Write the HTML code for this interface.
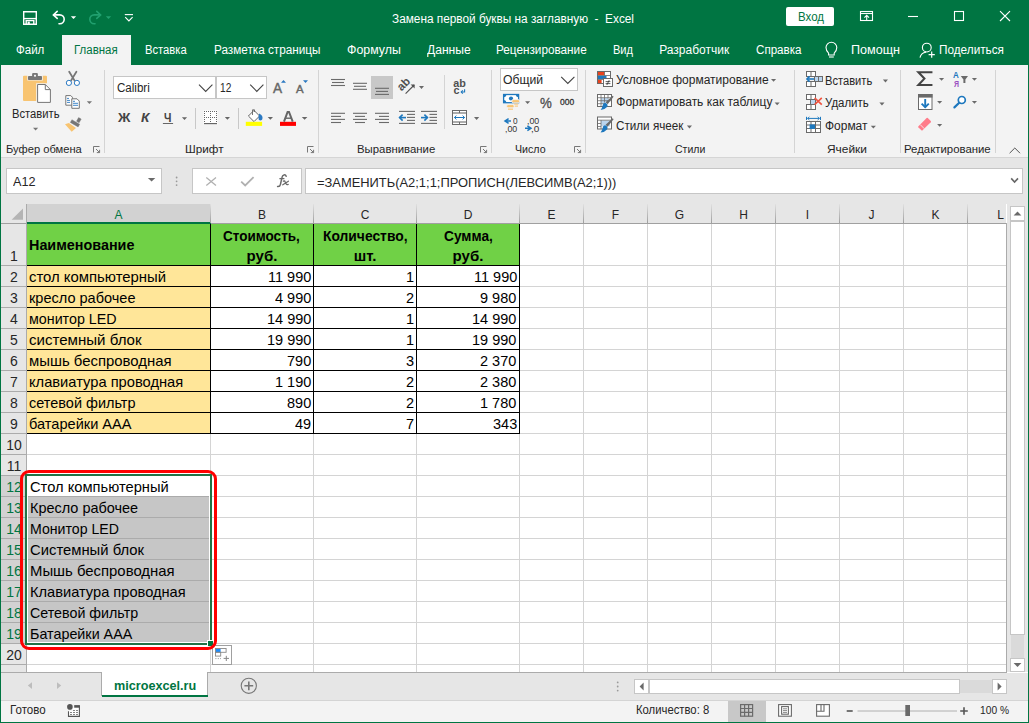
<!DOCTYPE html>
<html><head><meta charset="utf-8"><style>
html,body{margin:0;padding:0;}
body{width:1029px;height:723px;overflow:hidden;position:relative;background:#fff;font-family:"Liberation Sans", sans-serif;}
#r{position:absolute;left:0;top:0;width:1029px;height:723px;overflow:hidden;}
#r>*{position:absolute;}
.t{white-space:pre;transform-origin:0 0;}
svg{overflow:visible}
</style></head><body><div id="r">
<div style="left:0px;top:0px;width:1029px;height:65px;background:#007542;"></div>
<div style="left:62px;top:35px;width:69px;height:30px;background:#F3F3F3;"></div>
<div style="left:0px;top:65px;width:1029px;height:92px;background:#F3F3F3;"></div>
<div style="left:0px;top:157px;width:1029px;height:1px;background:#D5D5D5;"></div>
<div style="left:0px;top:158px;width:1029px;height:46px;background:#E6E6E6;"></div>
<div class="t" style="left:392.00px;top:13.35px;font-size:12px;line-height:12px;color:#fff;font-weight:normal;transform:scaleX(0.9847);">Замена первой буквы на заглавную  -  Excel</div>
<div style="left:786px;top:7px;width:48px;height:19px;background:#fff;border-radius:2px"></div>
<div class="t" style="left:797.50px;top:11.35px;font-size:12px;line-height:12px;color:#007542;font-weight:normal;transform:scaleX(0.9574);">Вход</div>
<div class="t" style="left:16.40px;top:44.35px;font-size:12px;line-height:12px;color:#fff;font-weight:normal;transform:scaleX(0.9588);">Файл</div>
<div class="t" style="left:74.00px;top:44.35px;font-size:12px;line-height:12px;color:#007542;font-weight:normal;transform:scaleX(0.9565);">Главная</div>
<div class="t" style="left:145.30px;top:44.35px;font-size:12px;line-height:12px;color:#fff;font-weight:normal;transform:scaleX(0.9348);">Вставка</div>
<div class="t" style="left:214.30px;top:44.35px;font-size:12px;line-height:12px;color:#fff;font-weight:normal;transform:scaleX(0.9782);">Разметка страницы</div>
<div class="t" style="left:347.00px;top:44.35px;font-size:12px;line-height:12px;color:#fff;font-weight:normal;transform:scaleX(1.0303);">Формулы</div>
<div class="t" style="left:426.50px;top:44.35px;font-size:12px;line-height:12px;color:#fff;font-weight:normal;transform:scaleX(1.0079);">Данные</div>
<div class="t" style="left:496.30px;top:44.35px;font-size:12px;line-height:12px;color:#fff;font-weight:normal;transform:scaleX(0.9787);">Рецензирование</div>
<div class="t" style="left:613.30px;top:44.35px;font-size:12px;line-height:12px;color:#fff;font-weight:normal;transform:scaleX(0.9209);">Вид</div>
<div class="t" style="left:659.20px;top:44.35px;font-size:12px;line-height:12px;color:#fff;font-weight:normal;">Разработчик</div>
<div class="t" style="left:755.50px;top:44.35px;font-size:12px;line-height:12px;color:#fff;font-weight:normal;transform:scaleX(0.9665);">Справка</div>
<div class="t" style="left:851.00px;top:44.35px;font-size:12px;line-height:12px;color:#fff;font-weight:normal;transform:scaleX(1.0485);">Помощн</div>
<div class="t" style="left:938.50px;top:44.35px;font-size:12px;line-height:12px;color:#fff;font-weight:normal;transform:scaleX(0.9809);">Поделиться</div>
<div class="t" style="left:6.40px;top:143.70px;font-size:11.3px;line-height:11.3px;color:#262626;font-weight:normal;transform:scaleX(0.9874);">Буфер обмена</div>
<div class="t" style="left:184.50px;top:143.70px;font-size:11.3px;line-height:11.3px;color:#262626;font-weight:normal;transform:scaleX(1.0357);">Шрифт</div>
<div class="t" style="left:357.30px;top:143.70px;font-size:11.3px;line-height:11.3px;color:#262626;font-weight:normal;transform:scaleX(1.0056);">Выравнивание</div>
<div class="t" style="left:514.60px;top:143.70px;font-size:11.3px;line-height:11.3px;color:#262626;font-weight:normal;transform:scaleX(0.9415);">Число</div>
<div class="t" style="left:674.70px;top:143.70px;font-size:11.3px;line-height:11.3px;color:#262626;font-weight:normal;transform:scaleX(0.9310);">Стили</div>
<div class="t" style="left:826.70px;top:143.70px;font-size:11.3px;line-height:11.3px;color:#262626;font-weight:normal;transform:scaleX(1.0557);">Ячейки</div>
<div class="t" style="left:904.30px;top:143.70px;font-size:11.3px;line-height:11.3px;color:#262626;font-weight:normal;transform:scaleX(1.0074);">Редактирование</div>
<div style="left:104px;top:70px;width:1px;height:83px;background:#D4D4D4;"></div>
<div style="left:318px;top:70px;width:1px;height:83px;background:#D4D4D4;"></div>
<div style="left:491px;top:70px;width:1px;height:83px;background:#D4D4D4;"></div>
<div style="left:585px;top:70px;width:1px;height:83px;background:#D4D4D4;"></div>
<div style="left:794px;top:70px;width:1px;height:83px;background:#D4D4D4;"></div>
<div style="left:900px;top:70px;width:1px;height:83px;background:#D4D4D4;"></div>
<div style="left:995px;top:70px;width:1px;height:83px;background:#D4D4D4;"></div>
<div style="left:6px;top:168px;width:156px;height:26px;box-sizing:border-box;border:1px solid #C6C6C6;background:#fff;"></div>
<div class="t" style="left:13.40px;top:176.35px;font-size:12px;line-height:12px;color:#262626;font-weight:normal;transform:scaleX(1.0534);">A12</div>
<div style="left:192px;top:168px;width:110px;height:26px;box-sizing:border-box;border:1px solid #C6C6C6;background:#fff;"></div>
<div style="left:305px;top:168px;width:718px;height:26px;box-sizing:border-box;border:1px solid #C6C6C6;background:#fff;"></div>
<div class="t" style="left:317.20px;top:177.35px;font-size:12px;line-height:12px;color:#262626;font-weight:normal;transform:scaleX(1.0750);">=ЗАМЕНИТЬ(A2;1;1;ПРОПИСН(ЛЕВСИМВ(A2;1)))</div>
<div style="left:1px;top:204px;width:1005px;height:19px;background:#E6E6E6;"></div>
<div style="left:27px;top:204px;width:183px;height:18px;background:#D2D2D2;"></div>
<div style="left:1px;top:223px;width:1005px;height:1px;background:#A0A0A0;"></div>
<div style="left:27px;top:222px;width:184px;height:2px;background:#007542;"></div>
<div style="left:1px;top:224px;width:25px;height:448px;background:#E6E6E6;"></div>
<div style="left:1px;top:476px;width:25px;height:167px;background:#D2D2D2;"></div>
<div style="left:26px;top:204px;width:1px;height:468px;background:#ABABAB;"></div>
<div style="left:27px;top:224px;width:979px;height:448px;background:#fff;"></div>
<div style="left:210px;top:204px;width:1px;height:19px;background:linear-gradient(#E0E0E0,#9E9E9E);"></div>
<div style="left:210px;top:224px;width:1px;height:448px;background:#D4D4D4;"></div>
<div style="left:313px;top:204px;width:1px;height:19px;background:linear-gradient(#E0E0E0,#9E9E9E);"></div>
<div style="left:313px;top:224px;width:1px;height:448px;background:#D4D4D4;"></div>
<div style="left:416px;top:204px;width:1px;height:19px;background:linear-gradient(#E0E0E0,#9E9E9E);"></div>
<div style="left:416px;top:224px;width:1px;height:448px;background:#D4D4D4;"></div>
<div style="left:519px;top:204px;width:1px;height:19px;background:linear-gradient(#E0E0E0,#9E9E9E);"></div>
<div style="left:519px;top:224px;width:1px;height:448px;background:#D4D4D4;"></div>
<div style="left:583px;top:204px;width:1px;height:19px;background:linear-gradient(#E0E0E0,#9E9E9E);"></div>
<div style="left:583px;top:224px;width:1px;height:448px;background:#D4D4D4;"></div>
<div style="left:647px;top:204px;width:1px;height:19px;background:linear-gradient(#E0E0E0,#9E9E9E);"></div>
<div style="left:647px;top:224px;width:1px;height:448px;background:#D4D4D4;"></div>
<div style="left:711px;top:204px;width:1px;height:19px;background:linear-gradient(#E0E0E0,#9E9E9E);"></div>
<div style="left:711px;top:224px;width:1px;height:448px;background:#D4D4D4;"></div>
<div style="left:775px;top:204px;width:1px;height:19px;background:linear-gradient(#E0E0E0,#9E9E9E);"></div>
<div style="left:775px;top:224px;width:1px;height:448px;background:#D4D4D4;"></div>
<div style="left:839px;top:204px;width:1px;height:19px;background:linear-gradient(#E0E0E0,#9E9E9E);"></div>
<div style="left:839px;top:224px;width:1px;height:448px;background:#D4D4D4;"></div>
<div style="left:903px;top:204px;width:1px;height:19px;background:linear-gradient(#E0E0E0,#9E9E9E);"></div>
<div style="left:903px;top:224px;width:1px;height:448px;background:#D4D4D4;"></div>
<div style="left:967px;top:204px;width:1px;height:19px;background:linear-gradient(#E0E0E0,#9E9E9E);"></div>
<div style="left:967px;top:224px;width:1px;height:448px;background:#D4D4D4;"></div>
<div style="left:1px;top:265px;width:25px;height:1px;background:#ABABAB;"></div>
<div style="left:27px;top:265px;width:979px;height:1px;background:#D4D4D4;"></div>
<div style="left:1px;top:286px;width:25px;height:1px;background:#ABABAB;"></div>
<div style="left:27px;top:286px;width:979px;height:1px;background:#D4D4D4;"></div>
<div style="left:1px;top:307px;width:25px;height:1px;background:#ABABAB;"></div>
<div style="left:27px;top:307px;width:979px;height:1px;background:#D4D4D4;"></div>
<div style="left:1px;top:328px;width:25px;height:1px;background:#ABABAB;"></div>
<div style="left:27px;top:328px;width:979px;height:1px;background:#D4D4D4;"></div>
<div style="left:1px;top:349px;width:25px;height:1px;background:#ABABAB;"></div>
<div style="left:27px;top:349px;width:979px;height:1px;background:#D4D4D4;"></div>
<div style="left:1px;top:370px;width:25px;height:1px;background:#ABABAB;"></div>
<div style="left:27px;top:370px;width:979px;height:1px;background:#D4D4D4;"></div>
<div style="left:1px;top:391px;width:25px;height:1px;background:#ABABAB;"></div>
<div style="left:27px;top:391px;width:979px;height:1px;background:#D4D4D4;"></div>
<div style="left:1px;top:412px;width:25px;height:1px;background:#ABABAB;"></div>
<div style="left:27px;top:412px;width:979px;height:1px;background:#D4D4D4;"></div>
<div style="left:1px;top:433px;width:25px;height:1px;background:#ABABAB;"></div>
<div style="left:27px;top:433px;width:979px;height:1px;background:#D4D4D4;"></div>
<div style="left:1px;top:454px;width:25px;height:1px;background:#ABABAB;"></div>
<div style="left:27px;top:454px;width:979px;height:1px;background:#D4D4D4;"></div>
<div style="left:1px;top:475px;width:25px;height:1px;background:#ABABAB;"></div>
<div style="left:27px;top:475px;width:979px;height:1px;background:#D4D4D4;"></div>
<div style="left:1px;top:496px;width:25px;height:1px;background:#ABABAB;"></div>
<div style="left:27px;top:496px;width:979px;height:1px;background:#D4D4D4;"></div>
<div style="left:1px;top:517px;width:25px;height:1px;background:#ABABAB;"></div>
<div style="left:27px;top:517px;width:979px;height:1px;background:#D4D4D4;"></div>
<div style="left:1px;top:538px;width:25px;height:1px;background:#ABABAB;"></div>
<div style="left:27px;top:538px;width:979px;height:1px;background:#D4D4D4;"></div>
<div style="left:1px;top:559px;width:25px;height:1px;background:#ABABAB;"></div>
<div style="left:27px;top:559px;width:979px;height:1px;background:#D4D4D4;"></div>
<div style="left:1px;top:580px;width:25px;height:1px;background:#ABABAB;"></div>
<div style="left:27px;top:580px;width:979px;height:1px;background:#D4D4D4;"></div>
<div style="left:1px;top:601px;width:25px;height:1px;background:#ABABAB;"></div>
<div style="left:27px;top:601px;width:979px;height:1px;background:#D4D4D4;"></div>
<div style="left:1px;top:622px;width:25px;height:1px;background:#ABABAB;"></div>
<div style="left:27px;top:622px;width:979px;height:1px;background:#D4D4D4;"></div>
<div style="left:1px;top:643px;width:25px;height:1px;background:#ABABAB;"></div>
<div style="left:27px;top:643px;width:979px;height:1px;background:#D4D4D4;"></div>
<div style="left:1px;top:664px;width:25px;height:1px;background:#ABABAB;"></div>
<div style="left:27px;top:664px;width:979px;height:1px;background:#D4D4D4;"></div>
<div style="left:1006px;top:223px;width:1px;height:450px;background:#ABABAB;"></div>
<div style="left:0px;top:672px;width:1007px;height:1px;background:#ABABAB;"></div>
<div class="t" style="left:114.49px;top:209.35px;font-size:12px;line-height:12px;color:#007542;font-weight:normal;">A</div>
<div class="t" style="left:257.99px;top:209.35px;font-size:12px;line-height:12px;color:#262626;font-weight:normal;">B</div>
<div class="t" style="left:360.66px;top:209.35px;font-size:12px;line-height:12px;color:#262626;font-weight:normal;">C</div>
<div class="t" style="left:463.66px;top:209.35px;font-size:12px;line-height:12px;color:#262626;font-weight:normal;">D</div>
<div class="t" style="left:547.49px;top:209.35px;font-size:12px;line-height:12px;color:#262626;font-weight:normal;">E</div>
<div class="t" style="left:611.83px;top:209.35px;font-size:12px;line-height:12px;color:#262626;font-weight:normal;">F</div>
<div class="t" style="left:674.83px;top:209.35px;font-size:12px;line-height:12px;color:#262626;font-weight:normal;">G</div>
<div class="t" style="left:739.16px;top:209.35px;font-size:12px;line-height:12px;color:#262626;font-weight:normal;">H</div>
<div class="t" style="left:805.83px;top:209.35px;font-size:12px;line-height:12px;color:#262626;font-weight:normal;">I</div>
<div class="t" style="left:868.50px;top:209.35px;font-size:12px;line-height:12px;color:#262626;font-weight:normal;">J</div>
<div class="t" style="left:931.49px;top:209.35px;font-size:12px;line-height:12px;color:#262626;font-weight:normal;">K</div>
<div class="t" style="left:997.16px;top:209.35px;font-size:12px;line-height:12px;color:#262626;font-weight:normal;">L</div>
<div class="t" style="left:10.10px;top:249.35px;font-size:14px;line-height:14px;color:#262626;font-weight:normal;">1</div>
<div class="t" style="left:10.10px;top:270.35px;font-size:14px;line-height:14px;color:#262626;font-weight:normal;">2</div>
<div class="t" style="left:10.10px;top:291.35px;font-size:14px;line-height:14px;color:#262626;font-weight:normal;">3</div>
<div class="t" style="left:10.10px;top:312.35px;font-size:14px;line-height:14px;color:#262626;font-weight:normal;">4</div>
<div class="t" style="left:10.10px;top:333.35px;font-size:14px;line-height:14px;color:#262626;font-weight:normal;">5</div>
<div class="t" style="left:10.10px;top:354.35px;font-size:14px;line-height:14px;color:#262626;font-weight:normal;">6</div>
<div class="t" style="left:10.10px;top:375.35px;font-size:14px;line-height:14px;color:#262626;font-weight:normal;">7</div>
<div class="t" style="left:10.10px;top:396.35px;font-size:14px;line-height:14px;color:#262626;font-weight:normal;">8</div>
<div class="t" style="left:10.10px;top:417.35px;font-size:14px;line-height:14px;color:#262626;font-weight:normal;">9</div>
<div class="t" style="left:6.21px;top:438.35px;font-size:14px;line-height:14px;color:#262626;font-weight:normal;">10</div>
<div class="t" style="left:6.73px;top:459.35px;font-size:14px;line-height:14px;color:#262626;font-weight:normal;">11</div>
<div class="t" style="left:6.21px;top:480.35px;font-size:14px;line-height:14px;color:#007542;font-weight:normal;">12</div>
<div class="t" style="left:6.21px;top:501.35px;font-size:14px;line-height:14px;color:#007542;font-weight:normal;">13</div>
<div class="t" style="left:6.21px;top:522.35px;font-size:14px;line-height:14px;color:#007542;font-weight:normal;">14</div>
<div class="t" style="left:6.21px;top:543.35px;font-size:14px;line-height:14px;color:#007542;font-weight:normal;">15</div>
<div class="t" style="left:6.21px;top:564.35px;font-size:14px;line-height:14px;color:#007542;font-weight:normal;">16</div>
<div class="t" style="left:6.21px;top:585.35px;font-size:14px;line-height:14px;color:#007542;font-weight:normal;">17</div>
<div class="t" style="left:6.21px;top:606.35px;font-size:14px;line-height:14px;color:#007542;font-weight:normal;">18</div>
<div class="t" style="left:6.21px;top:627.35px;font-size:14px;line-height:14px;color:#007542;font-weight:normal;">19</div>
<div class="t" style="left:6.21px;top:648.35px;font-size:14px;line-height:14px;color:#262626;font-weight:normal;">20</div>
<div style="left:27px;top:224px;width:183px;height:41px;background:#70D146;"></div>
<div style="left:211px;top:224px;width:308px;height:41px;background:#70D146;"></div>
<div style="left:27px;top:266px;width:183px;height:167px;background:#FFE699;"></div>
<div style="left:210px;top:224px;width:1px;height:210px;background:#000;"></div>
<div style="left:313px;top:224px;width:1px;height:210px;background:#000;"></div>
<div style="left:416px;top:224px;width:1px;height:210px;background:#000;"></div>
<div style="left:519px;top:224px;width:1px;height:210px;background:#000;"></div>
<div style="left:27px;top:265px;width:493px;height:1px;background:#000;"></div>
<div style="left:27px;top:286px;width:493px;height:1px;background:#000;"></div>
<div style="left:27px;top:307px;width:493px;height:1px;background:#000;"></div>
<div style="left:27px;top:328px;width:493px;height:1px;background:#000;"></div>
<div style="left:27px;top:349px;width:493px;height:1px;background:#000;"></div>
<div style="left:27px;top:370px;width:493px;height:1px;background:#000;"></div>
<div style="left:27px;top:391px;width:493px;height:1px;background:#000;"></div>
<div style="left:27px;top:412px;width:493px;height:1px;background:#000;"></div>
<div style="left:27px;top:433px;width:493px;height:1px;background:#000;"></div>
<div class="t" style="left:29.30px;top:269.35px;font-size:15px;line-height:15px;color:#000;font-weight:normal;transform:scaleX(0.9919);">стол компьютерный</div>
<div class="t" style="left:268.11px;top:269.35px;font-size:15px;line-height:15px;color:#000;font-weight:normal;transform:scaleX(0.9670);">11 990</div>
<div class="t" style="left:405.73px;top:269.35px;font-size:15px;line-height:15px;color:#000;font-weight:normal;transform:scaleX(0.9670);">1</div>
<div class="t" style="left:473.51px;top:269.35px;font-size:15px;line-height:15px;color:#000;font-weight:normal;transform:scaleX(0.9670);">11 990</div>
<div class="t" style="left:29.30px;top:290.35px;font-size:15px;line-height:15px;color:#000;font-weight:normal;transform:scaleX(0.9685);">кресло рабочее</div>
<div class="t" style="left:275.09px;top:290.35px;font-size:15px;line-height:15px;color:#000;font-weight:normal;transform:scaleX(0.9670);">4 990</div>
<div class="t" style="left:405.73px;top:290.35px;font-size:15px;line-height:15px;color:#000;font-weight:normal;transform:scaleX(0.9670);">2</div>
<div class="t" style="left:480.49px;top:290.35px;font-size:15px;line-height:15px;color:#000;font-weight:normal;transform:scaleX(0.9670);">9 980</div>
<div class="t" style="left:29.30px;top:311.35px;font-size:15px;line-height:15px;color:#000;font-weight:normal;transform:scaleX(0.9515);">монитор LED</div>
<div class="t" style="left:267.02px;top:311.35px;font-size:15px;line-height:15px;color:#000;font-weight:normal;transform:scaleX(0.9670);">14 990</div>
<div class="t" style="left:405.73px;top:311.35px;font-size:15px;line-height:15px;color:#000;font-weight:normal;transform:scaleX(0.9670);">1</div>
<div class="t" style="left:472.42px;top:311.35px;font-size:15px;line-height:15px;color:#000;font-weight:normal;transform:scaleX(0.9670);">14 990</div>
<div class="t" style="left:29.30px;top:332.35px;font-size:15px;line-height:15px;color:#000;font-weight:normal;transform:scaleX(1.0045);">системный блок</div>
<div class="t" style="left:267.02px;top:332.35px;font-size:15px;line-height:15px;color:#000;font-weight:normal;transform:scaleX(0.9670);">19 990</div>
<div class="t" style="left:405.73px;top:332.35px;font-size:15px;line-height:15px;color:#000;font-weight:normal;transform:scaleX(0.9670);">1</div>
<div class="t" style="left:472.42px;top:332.35px;font-size:15px;line-height:15px;color:#000;font-weight:normal;transform:scaleX(0.9670);">19 990</div>
<div class="t" style="left:29.30px;top:353.35px;font-size:15px;line-height:15px;color:#000;font-weight:normal;transform:scaleX(0.9930);">мышь беспроводная</div>
<div class="t" style="left:287.19px;top:353.35px;font-size:15px;line-height:15px;color:#000;font-weight:normal;transform:scaleX(0.9670);">790</div>
<div class="t" style="left:405.73px;top:353.35px;font-size:15px;line-height:15px;color:#000;font-weight:normal;transform:scaleX(0.9670);">3</div>
<div class="t" style="left:480.49px;top:353.35px;font-size:15px;line-height:15px;color:#000;font-weight:normal;transform:scaleX(0.9670);">2 370</div>
<div class="t" style="left:29.30px;top:374.35px;font-size:15px;line-height:15px;color:#000;font-weight:normal;transform:scaleX(0.9789);">клавиатура проводная</div>
<div class="t" style="left:275.09px;top:374.35px;font-size:15px;line-height:15px;color:#000;font-weight:normal;transform:scaleX(0.9670);">1 190</div>
<div class="t" style="left:405.73px;top:374.35px;font-size:15px;line-height:15px;color:#000;font-weight:normal;transform:scaleX(0.9670);">2</div>
<div class="t" style="left:480.49px;top:374.35px;font-size:15px;line-height:15px;color:#000;font-weight:normal;transform:scaleX(0.9670);">2 380</div>
<div class="t" style="left:29.30px;top:395.35px;font-size:15px;line-height:15px;color:#000;font-weight:normal;transform:scaleX(0.9646);">сетевой фильтр</div>
<div class="t" style="left:287.19px;top:395.35px;font-size:15px;line-height:15px;color:#000;font-weight:normal;transform:scaleX(0.9670);">890</div>
<div class="t" style="left:405.73px;top:395.35px;font-size:15px;line-height:15px;color:#000;font-weight:normal;transform:scaleX(0.9670);">2</div>
<div class="t" style="left:480.49px;top:395.35px;font-size:15px;line-height:15px;color:#000;font-weight:normal;transform:scaleX(0.9670);">1 780</div>
<div class="t" style="left:29.30px;top:416.35px;font-size:15px;line-height:15px;color:#000;font-weight:normal;transform:scaleX(0.9716);">батарейки AAA</div>
<div class="t" style="left:295.26px;top:416.35px;font-size:15px;line-height:15px;color:#000;font-weight:normal;transform:scaleX(0.9670);">49</div>
<div class="t" style="left:405.73px;top:416.35px;font-size:15px;line-height:15px;color:#000;font-weight:normal;transform:scaleX(0.9670);">7</div>
<div class="t" style="left:492.59px;top:416.35px;font-size:15px;line-height:15px;color:#000;font-weight:normal;transform:scaleX(0.9670);">343</div>
<div class="t" style="left:29.30px;top:237.35px;font-size:15px;line-height:15px;color:#000;font-weight:bold;transform:scaleX(0.9578);">Наименование</div>
<div class="t" style="left:223.10px;top:228.35px;font-size:15px;line-height:15px;color:#000;font-weight:bold;transform:scaleX(0.9002);">Стоимость,</div>
<div class="t" style="left:246.62px;top:248.35px;font-size:15px;line-height:15px;color:#000;font-weight:bold;">руб.</div>
<div class="t" style="left:322.75px;top:228.35px;font-size:15px;line-height:15px;color:#000;font-weight:bold;transform:scaleX(0.9226);">Количество,</div>
<div class="t" style="left:353.65px;top:248.35px;font-size:15px;line-height:15px;color:#000;font-weight:bold;">шт.</div>
<div class="t" style="left:443.80px;top:228.35px;font-size:15px;line-height:15px;color:#000;font-weight:bold;transform:scaleX(0.9124);">Сумма,</div>
<div class="t" style="left:452.62px;top:248.35px;font-size:15px;line-height:15px;color:#000;font-weight:bold;">руб.</div>
<div style="left:27px;top:476px;width:183px;height:167px;background:#fff;"></div>
<div style="left:28px;top:496px;width:181px;height:146px;background:#C6C6C6;"></div>
<div style="left:28px;top:496px;width:181px;height:1px;background:#ABABAB;"></div>
<div style="left:28px;top:517px;width:181px;height:1px;background:#ABABAB;"></div>
<div style="left:28px;top:538px;width:181px;height:1px;background:#ABABAB;"></div>
<div style="left:28px;top:559px;width:181px;height:1px;background:#ABABAB;"></div>
<div style="left:28px;top:580px;width:181px;height:1px;background:#ABABAB;"></div>
<div style="left:28px;top:601px;width:181px;height:1px;background:#ABABAB;"></div>
<div style="left:28px;top:622px;width:181px;height:1px;background:#ABABAB;"></div>
<div class="t" style="left:29.50px;top:479.35px;font-size:15px;line-height:15px;color:#000;font-weight:normal;transform:scaleX(0.9799);">Стол компьютерный</div>
<div class="t" style="left:29.50px;top:500.35px;font-size:15px;line-height:15px;color:#000;font-weight:normal;transform:scaleX(0.9638);">Кресло рабочее</div>
<div class="t" style="left:29.50px;top:521.35px;font-size:15px;line-height:15px;color:#000;font-weight:normal;transform:scaleX(0.9417);">Монитор LED</div>
<div class="t" style="left:29.50px;top:542.35px;font-size:15px;line-height:15px;color:#000;font-weight:normal;transform:scaleX(0.9875);">Системный блок</div>
<div class="t" style="left:29.50px;top:563.35px;font-size:15px;line-height:15px;color:#000;font-weight:normal;transform:scaleX(0.9925);">Мышь беспроводная</div>
<div class="t" style="left:29.50px;top:584.35px;font-size:15px;line-height:15px;color:#000;font-weight:normal;transform:scaleX(0.9759);">Клавиатура проводная</div>
<div class="t" style="left:29.50px;top:605.35px;font-size:15px;line-height:15px;color:#000;font-weight:normal;transform:scaleX(0.9503);">Сетевой фильтр</div>
<div class="t" style="left:29.50px;top:626.35px;font-size:15px;line-height:15px;color:#000;font-weight:normal;transform:scaleX(0.9552);">Батарейки AAA</div>
<div style="left:25px;top:474px;width:187px;height:171px;box-sizing:border-box;border:2px solid #217346"></div>
<div style="left:208px;top:641px;width:5px;height:5px;background:#007542;outline:1px solid #fff"></div>
<div style="left:1px;top:673px;width:1027px;height:27px;background:#E6E6E6;"></div>
<div style="left:102px;top:672px;width:106px;height:24px;background:#fff;"></div>
<div style="left:101px;top:672px;width:1px;height:24px;background:#ABABAB;"></div>
<div style="left:207px;top:672px;width:1px;height:24px;background:#ABABAB;"></div>
<div style="left:102px;top:695px;width:106px;height:2px;background:#007542;"></div>
<div class="t" style="left:113.70px;top:680.35px;font-size:12px;line-height:12px;color:#007542;font-weight:bold;transform:scaleX(1.0532);">microexcel.ru</div>
<div style="left:0px;top:700px;width:1029px;height:1px;background:#D4D4D4;"></div>
<div style="left:1px;top:701px;width:1027px;height:21px;background:#F3F3F3;"></div>
<div class="t" style="left:9.60px;top:704.35px;font-size:12px;line-height:12px;color:#262626;font-weight:normal;transform:scaleX(0.9605);">Готово</div>
<div class="t" style="left:636.30px;top:704.35px;font-size:12px;line-height:12px;color:#262626;font-weight:normal;transform:scaleX(0.9409);">Количество: 8</div>
<div class="t" style="left:979.80px;top:704.60px;font-size:11.5px;line-height:11.5px;color:#262626;font-weight:normal;transform:scaleX(0.8893);">100 %</div>
<div style="left:728px;top:701px;width:38px;height:21px;background:#C8C8C8;"></div>
<div style="left:0px;top:65px;width:1px;height:658px;background:#007542;"></div>
<div style="left:1028px;top:65px;width:1px;height:658px;background:#007542;"></div>
<div style="left:0px;top:722px;width:1029px;height:1px;background:#007542;"></div>
<svg style="left:0px;top:0px;" width="1029" height="65" viewBox="0 0 1029 65">
<g fill="none" stroke="#fff" stroke-width="1.4">
 <path d="M23.7 11.7 H36.3 V24.3 H23.7 Z"/>
 <path d="M24 18.6 H36"/>
 <path d="M26.2 24 V20.6 H33.8 V24"/>
</g>
<rect x="27.6" y="21.6" width="2.2" height="2.6" fill="#fff"/>
<g fill="none" stroke="#fff" stroke-width="1.6" stroke-linecap="round">
 <path d="M57.2 11.4 L53.4 14.9 L57.2 18.4"/>
 <path d="M53.8 14.9 H59.8 A4.4 4.4 0 0 1 59.8 23.7 H59"/>
</g>
<path d="M70.8 16.2 H76.2 L73.5 18.9 Z" fill="#fff"/>
<g fill="none" stroke="#21A06F" stroke-width="1.6" stroke-linecap="round">
 <path d="M96.8 11.4 L100.6 14.9 L96.8 18.4"/>
 <path d="M100.2 14.9 H94.2 A4.4 4.4 0 0 0 94.2 23.7 H95"/>
</g>
<path d="M105.8 16.2 H111.2 L108.5 18.9 Z" fill="#21A06F"/>
<path d="M124.8 14.6 H133" stroke="#fff" stroke-width="1.1"/>
<path d="M125.2 17.2 L128.9 20.9 L132.6 17.2" fill="none" stroke="#fff" stroke-width="1.1"/>
<g fill="none" stroke="#fff" stroke-width="1.1">
 <rect x="860.5" y="11.5" width="12" height="9"/>
 <path d="M860.5 13.5 H872.5"/>
 <path d="M866.7 20.5 V15.5 M864.4 17.6 L866.7 15.3 L869 17.6"/>
 <path d="M908 16.5 H918"/>
 <rect x="954.5" y="11.5" width="9" height="9"/>
 <path d="M1000 11.2 L1010 21 M1010 11.2 L1000 21"/>
</g>
</svg>
<svg style="left:0px;top:65px;" width="110" height="92" viewBox="0 0 110 92">
<g transform="translate(0,-65)">
 <!-- paste clipboard -->
 <path d="M24 75.7 H27.3 V80.6 H42.8 V75.7 H46 Q47 75.7 47 76.7 V83.3 H36.2 V100.9 H24 Q23 100.9 23 99.9 V76.7 Q23 75.7 24 75.7Z" fill="#F8C471"/>
 <rect x="28" y="76" width="14" height="4" rx="0.8" fill="#767676"/>
 <rect x="32.1" y="73" width="5.8" height="4" rx="1" fill="#767676"/>
 <rect x="34.1" y="74.8" width="1.8" height="1.8" fill="#fff"/>
 <path d="M37.6 84.5 H45.3 L50.4 89.6 V102.4 H37.6 Z" fill="#fff" stroke="#767676" stroke-width="1"/>
 <path d="M45.3 84.5 V89.6 H50.4" fill="none" stroke="#767676" stroke-width="1"/>
 <!-- arrow below paste -->
 <path d="M33 127.7 H38.2 L35.6 130.4 Z" fill="#767676"/>
 <!-- scissors -->
 <path d="M69.2 71.8 L74.6 80.6 M76.4 71.8 L71 80.6" stroke="#767676" stroke-width="1.8" stroke-linecap="round"/>
 <circle cx="68.9" cy="82.9" r="2.6" fill="#fff" stroke="#2B79C2" stroke-width="1"/>
 <circle cx="76.9" cy="82.9" r="2.6" fill="#fff" stroke="#2B79C2" stroke-width="1"/>
 <!-- copy -->
 <path d="M65.8 95.6 H70.8 L72.4 97.2 V105.2 H65.8 Z" fill="#fff" stroke="#767676" stroke-width="1"/>
 <path d="M67 98.4 H69 M67 100.4 H70 M67 102.4 H70" stroke="#2B79C2" stroke-width="0.9"/>
 <path d="M71.8 98.8 H77 L79.3 101.1 V108.3 H71.8 Z" fill="#fff" stroke="#767676" stroke-width="1"/>
 <path d="M73 101.3 H75 M73 103.3 H78 M73 105.3 H78" stroke="#2B79C2" stroke-width="0.9"/>
 <path d="M86.8 101.2 H92 L89.4 104 Z" fill="#767676"/>
 <!-- format painter -->
 <path d="M81.2 119.1 L78.6 117.6 L76.5 121.2 L79.1 122.8 Z" fill="#767676" stroke="#767676" stroke-width="0.4" stroke-linejoin="round"/>
 <path d="M78.1 126.9 L79.7 124.3 L71.9 119.7 L70.3 122.4 Z" fill="#767676" stroke="#767676" stroke-width="0.4" stroke-linejoin="round"/>
 <path d="M65 124.2 L68.9 122.9 L76 128.1 L71.7 131.7 Z" fill="#F8C471"/>
</g>
</svg>
<div style="left:113px;top:76px;width:103px;height:23px;box-sizing:border-box;border:1px solid #C6C6C6;background:#fff;"></div>
<div style="left:216px;top:76px;width:51px;height:23px;box-sizing:border-box;border:1px solid #C6C6C6;background:#fff;"></div>
<div class="t" style="left:116.80px;top:82.35px;font-size:12px;line-height:12px;color:#262626;font-weight:normal;transform:scaleX(0.9643);">Calibri</div>
<div class="t" style="left:219.70px;top:82.35px;font-size:12px;line-height:12px;color:#262626;font-weight:normal;transform:scaleX(0.8458);">12</div>
<svg style="left:0px;top:0px;" width="1029" height="160" viewBox="0 0 1029 160">
<g fill="none" stroke="#444444" stroke-width="1.1">
 <path d="M199 84.6 L205.7 91.4 L212.4 84.6"/>
 <path d="M250.2 84.6 L256.8 91.4 L263.4 84.6"/>
</g>
<path d="M281 82.7 L283.5 80 L286 82.7Z M303 80.2 H308 L305.5 82.9Z" fill="#2B79C2"/>
<path d="M181.9 117.2 H187.1 L184.5 120 Z M224.8 117 H230 L227.4 119.8 Z M267.7 117 H273 L270.35 119.8 Z M301.8 117 H307.4 L304.6 119.8 Z" fill="#666666"/>
<g fill="#666666">
 <rect x="162.9" y="123" width="10.2" height="1"/>
</g>
<rect x="203.5" y="110.5" width="14" height="14" fill="#fff"/><rect x="204" y="111" width="1" height="1" fill="#666"/><rect x="206" y="111" width="1" height="1" fill="#666"/><rect x="208" y="111" width="1" height="1" fill="#666"/><rect x="210" y="111" width="1" height="1" fill="#666"/><rect x="212" y="111" width="1" height="1" fill="#666"/><rect x="214" y="111" width="1" height="1" fill="#666"/><rect x="216" y="111" width="1" height="1" fill="#666"/><rect x="204" y="113" width="1" height="1" fill="#666"/><rect x="210" y="113" width="1" height="1" fill="#666"/><rect x="216" y="113" width="1" height="1" fill="#666"/><rect x="204" y="115" width="1" height="1" fill="#666"/><rect x="210" y="115" width="1" height="1" fill="#666"/><rect x="216" y="115" width="1" height="1" fill="#666"/><rect x="204" y="117" width="1" height="1" fill="#666"/><rect x="206" y="117" width="1" height="1" fill="#666"/><rect x="208" y="117" width="1" height="1" fill="#666"/><rect x="210" y="117" width="1" height="1" fill="#666"/><rect x="212" y="117" width="1" height="1" fill="#666"/><rect x="214" y="117" width="1" height="1" fill="#666"/><rect x="216" y="117" width="1" height="1" fill="#666"/><rect x="204" y="119" width="1" height="1" fill="#666"/><rect x="210" y="119" width="1" height="1" fill="#666"/><rect x="216" y="119" width="1" height="1" fill="#666"/><rect x="204" y="121" width="1" height="1" fill="#666"/><rect x="210" y="121" width="1" height="1" fill="#666"/><rect x="216" y="121" width="1" height="1" fill="#666"/><rect x="204" y="123" width="13" height="1.2" fill="#666"/>
<path d="M248.4 116 L254 110.4 L259.6 116 L254 121.6 Z" fill="#fff" stroke="#666666" stroke-width="1"/>
<path d="M252.5 115 V109.8 H254.5 V112" fill="none" stroke="#666666" stroke-width="0.9"/>
<path d="M259.2 113.4 Q263.6 115.4 262.2 119.6 Q260.6 121.4 258.8 119.8 Q258 117 259.2 113.4Z" fill="#2B79C2"/>
<rect x="245.8" y="121.8" width="16.3" height="4.1" fill="#FFFF00"/>
<rect x="280" y="121.8" width="16" height="4.1" fill="#FF0000"/>
<path d="M284 121.6 L287.6 111.9 H289 L292.7 121.6" fill="none" stroke="#666666" stroke-width="2"/>
<path d="M285.3 118.2 H291.4" stroke="#666666" stroke-width="1.4"/>
<rect x="195" y="108" width="1" height="21" fill="#C8C8C8"/>
<rect x="238" y="108" width="1" height="21" fill="#C8C8C8"/>
</svg>
<div class="t" style="left:117.70px;top:111.35px;font-size:13px;line-height:13px;color:#444444;font-weight:bold;transform:scaleX(1.0553);">Ж</div>
<div class="t" style="left:141.00px;top:111.35px;font-size:13px;line-height:13px;color:#444444;font-weight:bold;font-style:italic;transform:scaleX(1.0500);">К</div>
<div class="t" style="left:163.80px;top:111.35px;font-size:13px;line-height:13px;color:#444444;font-weight:bold;transform:scaleX(0.8096);">Ч</div>
<div class="t" style="left:273.20px;top:81.35px;font-size:14px;line-height:14px;color:#666666;font-weight:normal;transform:scaleX(0.9739);-webkit-text-stroke:0.4px #666;">A</div>
<div class="t" style="left:296.10px;top:83.85px;font-size:11px;line-height:11px;color:#666666;font-weight:normal;transform:scaleX(1.0349);-webkit-text-stroke:0.4px #666;">A</div>
<div class="t" style="left:11.50px;top:108.35px;font-size:12px;line-height:12px;color:#262626;font-weight:normal;transform:scaleX(0.9337);">Вставить</div>
<svg style="left:0px;top:0px;" width="1029" height="160" viewBox="0 0 1029 160"><rect x="371" y="76" width="22" height="23" fill="#C8C8C8"/><path d="M331 79.5 H345" stroke="#6A6A6A" stroke-width="1.1"/><path d="M332 82.5 H344" stroke="#6A6A6A" stroke-width="1.1"/><path d="M331 85.5 H345" stroke="#6A6A6A" stroke-width="1.1"/><path d="M353 83.3 H367" stroke="#6A6A6A" stroke-width="1.1"/><path d="M354 86.3 H366" stroke="#6A6A6A" stroke-width="1.1"/><path d="M353 89.3 H367" stroke="#6A6A6A" stroke-width="1.1"/><path d="M375 88.3 H389" stroke="#6A6A6A" stroke-width="1.1"/><path d="M376 91.4 H388" stroke="#6A6A6A" stroke-width="1.1"/><path d="M375 94.4 H389" stroke="#6A6A6A" stroke-width="1.1"/><path d="M331 113.3 H345" stroke="#6A6A6A" stroke-width="1.1"/><path d="M353 113.3 H367" stroke="#6A6A6A" stroke-width="1.1"/><path d="M375 113.3 H389" stroke="#6A6A6A" stroke-width="1.1"/><path d="M331 116.4 H341" stroke="#6A6A6A" stroke-width="1.1"/><path d="M355 116.4 H365" stroke="#6A6A6A" stroke-width="1.1"/><path d="M379 116.4 H389" stroke="#6A6A6A" stroke-width="1.1"/><path d="M331 119.4 H345" stroke="#6A6A6A" stroke-width="1.1"/><path d="M353 119.4 H367" stroke="#6A6A6A" stroke-width="1.1"/><path d="M375 119.4 H389" stroke="#6A6A6A" stroke-width="1.1"/><path d="M331 122.5 H341" stroke="#6A6A6A" stroke-width="1.1"/><path d="M355 122.5 H365" stroke="#6A6A6A" stroke-width="1.1"/><path d="M379 122.5 H389" stroke="#6A6A6A" stroke-width="1.1"/><path d="M399 111.4 H415" stroke="#6A6A6A" stroke-width="1.1"/><path d="M407 114.4 H415" stroke="#6A6A6A" stroke-width="1.1"/><path d="M407 117.4 H415" stroke="#6A6A6A" stroke-width="1.1"/><path d="M407 120.4 H415" stroke="#6A6A6A" stroke-width="1.1"/><path d="M399 123.4 H415" stroke="#6A6A6A" stroke-width="1.1"/><path d="M399.5 117.6 H406" stroke="#1E78BE" stroke-width="1.6"/><path d="M402.6 114.6 L399.6 117.6 L402.6 120.6" fill="none" stroke="#1E78BE" stroke-width="1.6"/><path d="M421 111.4 H437" stroke="#6A6A6A" stroke-width="1.1"/><path d="M429.5 114.4 H437" stroke="#6A6A6A" stroke-width="1.1"/><path d="M429.5 117.4 H437" stroke="#6A6A6A" stroke-width="1.1"/><path d="M429.5 120.4 H437" stroke="#6A6A6A" stroke-width="1.1"/><path d="M421 123.4 H437" stroke="#6A6A6A" stroke-width="1.1"/><path d="M421 117.6 H427.5" stroke="#1E78BE" stroke-width="1.6"/><path d="M424.4 114.6 L427.4 117.6 L424.4 120.6" fill="none" stroke="#1E78BE" stroke-width="1.6"/><text x="0" y="0" transform="translate(401.6,91.4) rotate(-45)" font-family="Liberation Sans" font-weight="bold" font-size="11.5" fill="#505050">ab</text><path d="M405.6 93.6 L414.2 85" stroke="#505050" stroke-width="1.1"/><path d="M410.6 84.6 H414.6 V88.6 Z" fill="#505050"/><path d="M419 86 H424 L421.5 89 Z M474 116.9 H479.2 L476.6 120 Z" fill="#6A6A6A"/><text x="453.2" y="86.8" font-family="Liberation Sans" font-weight="bold" font-size="10.4" fill="#505050" textLength="12.6" lengthAdjust="spacingAndGlyphs">ab</text><text x="453.6" y="93.9" font-family="Liberation Sans" font-weight="bold" font-size="10.8" fill="#505050">c</text><path d="M464.6 89.2 V92 H461.4" fill="none" stroke="#1E78BE" stroke-width="1.1"/><path d="M462.8 90.4 L461.2 92 L462.8 93.6" fill="none" stroke="#1E78BE" stroke-width="1.1"/><rect x="452.5" y="110.5" width="14" height="14" fill="#fff" stroke="#6A6A6A" stroke-width="1"/><path d="M452.5 113 H466.5" stroke="#6A6A6A" stroke-width="1.1"/><path d="M452.5 122 H466.5" stroke="#6A6A6A" stroke-width="1.1"/><path d="M459.5 110.5 V113 M459.5 122 V124.5" stroke="#6A6A6A" stroke-width="1"/><path d="M454.5 117.5 H464.6" stroke="#1E78BE" stroke-width="1"/><path d="M456.4 115.6 L454.4 117.5 L456.4 119.4 M462.6 115.6 L464.6 117.5 L462.6 119.4" fill="none" stroke="#1E78BE" stroke-width="1"/></svg>
<div style="left:500px;top:68px;width:78px;height:23px;box-sizing:border-box;border:1px solid #C6C6C6;background:#fff;"></div>
<div class="t" style="left:503.40px;top:74.35px;font-size:12px;line-height:12px;color:#262626;font-weight:normal;transform:scaleX(1.0152);">Общий</div>
<svg style="left:0px;top:0px;" width="1029" height="160" viewBox="0 0 1029 160"><path d="M561.2 76.8 L567.8 83.4 L574.4 76.8" fill="none" stroke="#444" stroke-width="1.1"/><rect x="503.6" y="94.5" width="15" height="8.2" fill="#fff" stroke="#1E78BE" stroke-width="1.3"/><path d="M504 95 H506.4 Q506.2 96.8 504 97.2Z M518.2 95 H515.8 Q516 96.8 518.2 97.2Z M504 102.2 H506.4 Q506.2 100.4 504 100Z" fill="#1E78BE"/><circle cx="511" cy="98.5" r="2.1" fill="#1E78BE"/><rect x="511.8" y="99.6" width="7.8" height="3.2" rx="1.5" fill="#F8C471" stroke="#F3F3F3" stroke-width="0.9"/><rect x="514.2" y="103.6" width="4" height="1" fill="#F8C471"/><rect x="514.8" y="105.6" width="3.2" height="1" fill="#F8C471"/><rect x="506.6" y="104.6" width="7.6" height="3.2" rx="1.5" fill="#F8C471" stroke="#F3F3F3" stroke-width="0.9"/><rect x="508" y="108.6" width="5" height="1.1" fill="#F8C471"/><path d="M525.1 101.2 H530.1 L527.6 104 Z" fill="#666"/><path d="M508.6 118.6 L505 121 L508.6 123.4 M505.4 121 H511" fill="none" stroke="#1E78BE" stroke-width="1.5"/><path d="M527.4 125.8 L531 128.2 L527.4 130.6 M525 128.2 H530.6" fill="none" stroke="#1E78BE" stroke-width="1.5"/></svg>
<div class="t" style="left:539.60px;top:95.35px;font-size:15px;line-height:15px;color:#505050;font-weight:normal;transform:scaleX(0.8843);-webkit-text-stroke:0.35px #505050;">%</div>
<div class="t" style="left:559.80px;top:97.10px;font-size:9.5px;line-height:9.5px;color:#333;font-weight:normal;transform:scaleX(0.8954);-webkit-text-stroke:0.3px #333;">000</div>
<div class="t" style="left:512.60px;top:117.10px;font-size:8.5px;line-height:8.5px;color:#333;font-weight:normal;transform:scaleX(0.9716);">0</div>
<div class="t" style="left:504.60px;top:125.10px;font-size:8.5px;line-height:8.5px;color:#333;font-weight:normal;transform:scaleX(1.0399);">,00</div>
<div class="t" style="left:526.80px;top:117.10px;font-size:8.5px;line-height:8.5px;color:#333;font-weight:normal;transform:scaleX(1.0399);">,00</div>
<div class="t" style="left:530.50px;top:125.10px;font-size:8.5px;line-height:8.5px;color:#333;font-weight:normal;transform:scaleX(1.1700);">,0</div>
<div style="left:444px;top:75px;width:1px;height:54px;background:#D4D4D4;"></div>
<svg style="left:0px;top:0px;" width="1029" height="160" viewBox="0 0 1029 160"><rect x="597.5" y="71.5" width="13" height="12" fill="#fff" stroke="#6A6A6A" stroke-width="1"/><rect x="598" y="72" width="6.5" height="3.2" fill="#E8431E"/><rect x="598" y="75.8" width="8.5" height="3.2" fill="#1E78BE"/><rect x="598" y="79.6" width="3.6" height="3.5" fill="#E8431E"/><path d="M604.5 72 V75.5 M597.5 75.5 H610.5 M597.5 79.5 H603" stroke="#6A6A6A" stroke-width="0.8"/><rect x="603.5" y="78.5" width="9" height="8" fill="#fff" stroke="#6A6A6A" stroke-width="1"/><path d="M605.6 81.6 H610.4 M605.6 83.6 H610.4 M609.2 80.2 L606.8 85" stroke="#333" stroke-width="0.8"/><rect x="597.5" y="94.5" width="14" height="12" fill="#fff" stroke="#6A6A6A" stroke-width="1"/><rect x="601" y="98.0" width="7.5" height="5" fill="#BBD5EE"/><path d="M597.5 97.7 H611.5 M597.5 100.7 H611.5 M597.5 103.7 H604 M601 94.5 V106.5 M604.5 94.5 V102.5 M608 94.5 V98.5" stroke="#6A6A6A" stroke-width="0.8"/><path d="M612.6 95.7 L613.6 96.7 L607.6 104.3 L605.6 102.3 Z" fill="#6A6A6A"/><path d="M605 102.7 Q608.8 103.9 607 107.1 Q604.5 110.1 600.6 110.1 Q602.4 107.5 602.6 105.5 Q603 102.9 605 102.7Z" fill="#1E78BE"/><rect x="597.5" y="117" width="14" height="12" fill="#fff" stroke="#6A6A6A" stroke-width="1"/><rect x="601" y="120.5" width="9" height="6" fill="#BBD5EE"/><path d="M597.5 120.2 H611.5 M597.5 123.5 H601 M597.5 126.5 H601 M601 120 V129" stroke="#6A6A6A" stroke-width="0.8"/><path d="M612.6 118.2 L613.6 119.2 L607.6 126.8 L605.6 124.8 Z" fill="#6A6A6A"/><path d="M605 125.2 Q608.8 126.4 607 129.6 Q604.5 132.6 600.6 132.6 Q602.4 130 602.6 128 Q603 125.4 605 125.2Z" fill="#1E78BE"/><g fill="#fff" stroke="#6A6A6A" stroke-width="1"><rect x="806.5" y="71.5" width="9" height="5"/><path d="M811 71.5 V76.5" /><rect x="806.5" y="81.5" width="9" height="5"/><path d="M811 81.5 V86.5"/><rect x="814.5" y="76.5" width="8" height="5" fill="#BBD5EE"/><path d="M818.5 76.5 V81.5"/><rect x="806.5" y="94.5" width="9" height="5"/><path d="M811 94.5 V99.5"/><rect x="806.5" y="104.5" width="9" height="5"/><path d="M811 104.5 V109.5"/><rect x="810.5" y="99.5" width="5" height="5" fill="#BBD5EE"/><rect x="806.5" y="121.5" width="14" height="11"/><path d="M806.5 125 H820.5 M806.5 128.5 H820.5 M811 121.5 V132.5 M815.5 121.5 V132.5"/></g><path d="M807 79 H814" stroke="#1E78BE" stroke-width="1.6"/><path d="M809.6 76.4 L807 79 L809.6 81.6" fill="none" stroke="#1E78BE" stroke-width="1.6"/><path d="M814.6 97.8 L821.8 104.6 M821.8 97.8 L814.6 104.6" stroke="#F0533F" stroke-width="1.6"/><rect x="809.6" y="124.4" width="5.4" height="4.6" fill="#1E78BE"/><path d="M806.5 116.8 V120 M820.5 116.8 V120 M807.5 118.4 H819.5" stroke="#1E78BE" stroke-width="1"/><path d="M809.4 116.8 L807.6 118.4 L809.4 120 M817.6 116.8 L819.4 118.4 L817.6 120" fill="none" stroke="#1E78BE" stroke-width="0.9"/><path d="M771 79 H776.1 L773.55 81.8 Z" fill="#6A6A6A"/><path d="M774.6 102.4 H779.7 L777.15 105.2 Z" fill="#6A6A6A"/><path d="M686.9 125.6 H692.0 L689.4499999999999 128.4 Z" fill="#6A6A6A"/><path d="M882.9 79.6 H888.0 L885.4499999999999 82.39999999999999 Z" fill="#6A6A6A"/><path d="M879.4 102.6 H884.5 L881.9499999999999 105.39999999999999 Z" fill="#6A6A6A"/><path d="M870.8 125.8 H875.9 L873.3499999999999 128.6 Z" fill="#6A6A6A"/><path d="M939 77.9 H944.1 L941.55 80.7 Z" fill="#6A6A6A"/><path d="M971.9 77.9 H977.0 L974.4499999999999 80.7 Z" fill="#6A6A6A"/><path d="M937.1 100.9 H942.2 L939.65 103.7 Z" fill="#6A6A6A"/><path d="M971.9 100.9 H977.0 L974.4499999999999 103.7 Z" fill="#6A6A6A"/><path d="M937.1 124 H942.2 L939.65 126.8 Z" fill="#6A6A6A"/><path d="M931.4 73.2 V72.2 H918.4 L924.4 78.6 L918.4 85 H931.4 V84" fill="none" stroke="#444" stroke-width="2.1" stroke-linejoin="miter"/><path d="M960.8 76 H968 L965.4 79.4 V83 H963.4 V79.4 Z" fill="#6A6A6A"/><rect x="918.5" y="94.5" width="13.5" height="15" fill="#fff" stroke="#6A6A6A" stroke-width="1"/><rect x="918" y="94" width="14.5" height="3.6" fill="#6A6A6A"/><path d="M925.2 99 V107.4" stroke="#1E78BE" stroke-width="1.9"/><path d="M921.6 103.6 L925.2 107.2 L928.8 103.6" fill="none" stroke="#1E78BE" stroke-width="1.9"/><circle cx="961.8" cy="100" r="3.5" fill="#fff" stroke="#1E78BE" stroke-width="1.7"/><path d="M959.2 102.8 L954.4 107.4" stroke="#1E78BE" stroke-width="2.2" stroke-linecap="round"/><g transform="rotate(-45 924.6 124.2)"><rect x="918" y="121.3" width="13.2" height="5.8" rx="0.8" fill="#FF7C8A"/><path d="M921.2 121.3 V127.1" stroke="#F3F3F3" stroke-width="0.8"/></g><path d="M1009.6 153.2 L1014.8 148 L1020 153.2" fill="none" stroke="#555" stroke-width="1"/><path d="M93.5 152.5 V146.5 H99.5" fill="none" stroke="#777" stroke-width="1"/><path d="M96 149 L99.6 152.6 M99.6 149.8 V152.6 H96.8" fill="none" stroke="#777" stroke-width="1"/><path d="M307.5 152.5 V146.5 H313.5" fill="none" stroke="#777" stroke-width="1"/><path d="M310 149 L313.6 152.6 M313.6 149.8 V152.6 H310.8" fill="none" stroke="#777" stroke-width="1"/><path d="M480.5 152.5 V146.5 H486.5" fill="none" stroke="#777" stroke-width="1"/><path d="M483 149 L486.6 152.6 M486.6 149.8 V152.6 H483.8" fill="none" stroke="#777" stroke-width="1"/><path d="M574.5 152.5 V146.5 H580.5" fill="none" stroke="#777" stroke-width="1"/><path d="M577 149 L580.6 152.6 M580.6 149.8 V152.6 H577.8" fill="none" stroke="#777" stroke-width="1"/></svg>
<div class="t" style="left:953.00px;top:70.05px;font-size:9.6px;line-height:9.6px;color:#1E78BE;font-weight:bold;transform:scaleX(0.8360);">А</div>
<div class="t" style="left:953.50px;top:79.85px;font-size:9px;line-height:9px;color:#9B4FC1;font-weight:bold;transform:scaleX(0.7729);">Я</div>
<div class="t" style="left:615.90px;top:74.35px;font-size:12px;line-height:12px;color:#262626;font-weight:normal;">Условное форматирование</div>
<div class="t" style="left:616.30px;top:96.35px;font-size:12px;line-height:12px;color:#262626;font-weight:normal;">Форматировать как таблицу</div>
<div class="t" style="left:616.30px;top:120.35px;font-size:12px;line-height:12px;color:#262626;font-weight:normal;transform:scaleX(0.9731);">Стили ячеек</div>
<div class="t" style="left:825.30px;top:75.35px;font-size:12px;line-height:12px;color:#262626;font-weight:normal;transform:scaleX(0.9278);">Вставить</div>
<div class="t" style="left:825.30px;top:97.35px;font-size:12px;line-height:12px;color:#262626;font-weight:normal;transform:scaleX(0.9536);">Удалить</div>
<div class="t" style="left:825.30px;top:120.35px;font-size:12px;line-height:12px;color:#262626;font-weight:normal;transform:scaleX(0.9967);">Формат</div>
<svg style="left:0px;top:0px;" width="1029" height="723" viewBox="0 0 1029 723"><path d="M147.9 178 H155.3 L151.6 181.6 Z" fill="#6A6A6A"/><circle cx="176.6" cy="177.5" r="0.9" fill="#9A9A9A"/><circle cx="176.6" cy="181.3" r="0.9" fill="#9A9A9A"/><circle cx="176.6" cy="185.1" r="0.9" fill="#9A9A9A"/><path d="M206.3 177.4 L216 185.4 M216 177.4 L206.3 185.4" stroke="#B0B0B0" stroke-width="1.3"/><path d="M241.2 181.6 L245.2 185.4 L253.6 177.2" fill="none" stroke="#B0B0B0" stroke-width="1.8"/><path d="M1011.2 178.4 L1014.6 182 L1018 178.4" fill="none" stroke="#666" stroke-width="1.6"/><path d="M23 208.4 V219.8 H11.6 Z" fill="#B4B4B4"/><rect x="1007" y="204" width="21" height="468" fill="#E6E6E6"/><rect x="1010.5" y="206.5" width="14" height="14" fill="#fff" stroke="#C6C6C6" stroke-width="1"/><path d="M1013.6 215.6 H1021.4 L1017.5 211.6 Z" fill="#6A6A6A"/><rect x="1010.5" y="221.5" width="14" height="413" fill="#fff" stroke="#C6C6C6" stroke-width="1"/><rect x="1011" y="635" width="13" height="23" fill="#DADADA"/><rect x="1010.5" y="658.5" width="14" height="13" fill="#fff" stroke="#C6C6C6" stroke-width="1"/><path d="M1013.6 663 H1021.4 L1017.5 667 Z" fill="#6A6A6A"/><path d="M32 682.2 V689 L27.8 685.6 Z" fill="#BDBDBD"/><path d="M57 682.2 V689 L61.2 685.6 Z" fill="#BDBDBD"/><circle cx="248.8" cy="685.8" r="7.6" fill="none" stroke="#777" stroke-width="1.1"/><path d="M244.4 685.8 H253.2 M248.8 681.4 V690.2" stroke="#777" stroke-width="1.6"/><circle cx="617.7" cy="682.4" r="0.9" fill="#9A9A9A"/><circle cx="617.7" cy="686.5" r="0.9" fill="#9A9A9A"/><circle cx="617.7" cy="690.6" r="0.9" fill="#9A9A9A"/><rect x="634.5" y="679.5" width="14" height="14" fill="#fff" stroke="#C6C6C6" stroke-width="1"/><path d="M643.6 682.6 V690.4 L639.6 686.5 Z" fill="#6A6A6A"/><rect x="649.5" y="679.5" width="310" height="14" fill="#fff" stroke="#C6C6C6" stroke-width="1"/><rect x="960" y="680" width="32" height="13" fill="#DADADA"/><rect x="992.5" y="679.5" width="14" height="14" fill="#fff" stroke="#C6C6C6" stroke-width="1"/><path d="M997.6 682.6 V690.4 L1001.6 686.5 Z" fill="#6A6A6A"/><path d="M68.4 716.4 V711 H72.6 V708 H74.2 V705 H79.6 V716.4 Z" fill="#fff"/><path d="M68.5 711.2 V716.4 H79.4 V705.4" fill="none" stroke="#555" stroke-width="1.1"/><rect x="74.2" y="705.1" width="5.6" height="2.6" fill="#555"/><circle cx="69.9" cy="706.9" r="2.8" fill="#555"/><rect x="73.2" y="710" width="1.6" height="0.9" fill="#555"/><rect x="76.2" y="710" width="1.6" height="0.9" fill="#555"/><rect x="70.2" y="712" width="1.6" height="0.9" fill="#555"/><rect x="73.2" y="712" width="1.6" height="0.9" fill="#555"/><rect x="76.2" y="712" width="1.6" height="0.9" fill="#555"/><rect x="70.2" y="714" width="1.6" height="0.9" fill="#555"/><rect x="73.2" y="714" width="1.6" height="0.9" fill="#555"/><rect x="76.2" y="714" width="1.6" height="0.9" fill="#555"/><g fill="none" stroke="#6A6A6A" stroke-width="1.2"><rect x="740.6" y="704.6" width="12" height="11.6"/><path d="M744.6 704.6 V716.2 M748.6 704.6 V716.2 M740.6 708.5 H752.6 M740.6 712.4 H752.6"/></g><g fill="none" stroke="#6A6A6A" stroke-width="1.1"><rect x="778.6" y="704.6" width="12.8" height="11.6" fill="#fff"/><rect x="781.6" y="706.6" width="6.8" height="7.6" fill="#fff"/><path d="M783 708.8 H787 M783 710.6 H787 M783 712.4 H787" stroke-width="0.8"/></g><g fill="none" stroke="#6A6A6A" stroke-width="1.1"><rect x="816.6" y="704.6" width="12.8" height="11.6" fill="#fff"/><path d="M816.6 711.2 H824 V704.6 M821 704.6 V711.2"/></g><path d="M846.7 711 H852.7" stroke="#555" stroke-width="1.6"/><path d="M857.5 711 H957" stroke="#B0B0B0" stroke-width="1"/><rect x="905.3" y="705" width="4.7" height="11" fill="#6A6A6A"/><path d="M960.2 711 H967.8 M964 707.2 V714.8" stroke="#555" stroke-width="1.6"/><rect x="212.5" y="645.5" width="19" height="19" fill="#fff" stroke="#A0A0A0" stroke-width="1"/><rect x="215.6" y="648.6" width="5" height="3.4" fill="#1A8CFF"/><rect x="215.5" y="648.5" width="10.6" height="3.8" fill="none" stroke="#888" stroke-width="0.9"/><rect x="215.5" y="652.3" width="5.2" height="3.8" fill="none" stroke="#888" stroke-width="0.9"/><path d="M215.4 658.6 H221" stroke="#888" stroke-width="0.9" stroke-dasharray="1 1.4"/><path d="M223.6 658.4 H229 M226.3 655.8 V661" stroke="#888" stroke-width="1"/></svg>
<svg style="left:0px;top:0px;" width="1029" height="65" viewBox="0 0 1029 65"><path d="M828.6 53.2 Q826 50.8 826 47.6 A5.4 5.4 0 0 1 836.8 47.6 Q836.8 50.8 834.2 53.2 V55 H828.6 Z" fill="none" stroke="#fff" stroke-width="1.1"/><path d="M829 57 H833.8" stroke="#fff" stroke-width="1.1"/><circle cx="926.8" cy="47.6" r="4.4" fill="none" stroke="#fff" stroke-width="1.1"/><path d="M920 57.6 Q921 52.8 926 52.2" fill="none" stroke="#fff" stroke-width="1.1"/><path d="M928.6 54.6 H934.8 M931.7 51.4 V57.8" stroke="#fff" stroke-width="1.2"/></svg>
<svg style="left:0px;top:0px;" width="1029" height="723" viewBox="0 0 1029 723"><path d="M286.2 176.2 Q285.6 174.6 284 174.9 Q282.4 175.2 282 177.4 L280.4 184.6 Q279.9 186.8 277.6 186.6" fill="none" stroke="#6A6A6A" stroke-width="1.5" stroke-linecap="round"/><path d="M279.4 178.6 H284.4" stroke="#6A6A6A" stroke-width="1.3"/><path d="M283.4 181.2 Q284.6 180.6 285 181.6 L286.2 184 Q286.7 185 288.2 184.4 M288.4 181.2 L282.8 184.8" fill="none" stroke="#6A6A6A" stroke-width="1.3" stroke-linecap="round"/></svg>
<div style="left:20px;top:470px;width:197px;height:180px;box-sizing:border-box;border:3px solid #FF0000;border-radius:9px"></div>
</div></body></html>
